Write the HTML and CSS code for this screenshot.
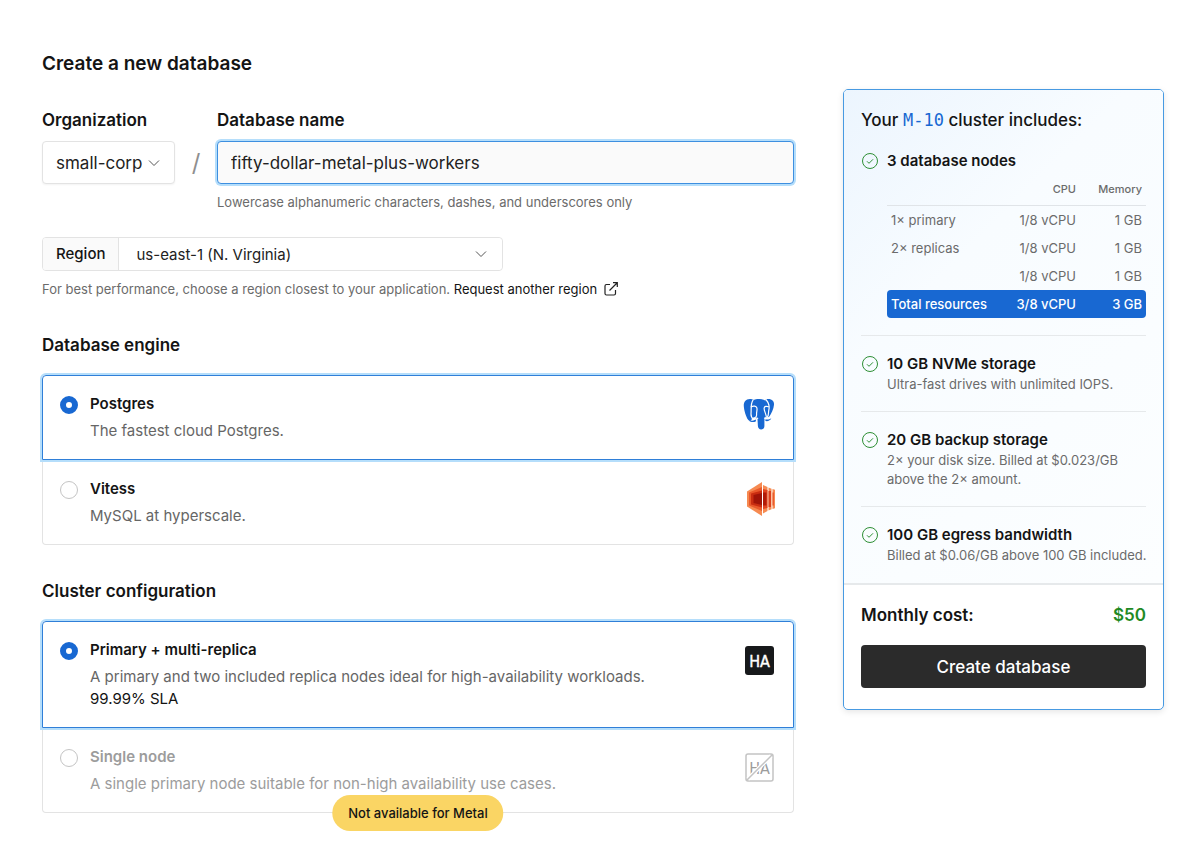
FILE: index.html
```html
<!DOCTYPE html>
<html lang="en">
<head>
    <meta charset="UTF-8">
    <meta name="viewport" content="width=device-width, initial-scale=1.0">
    <title>Create a new database</title>
    <link rel="stylesheet" href="styles.css">
</head>
<body>
    <form class="page">
        <main class="main">
            <h1 class="page-title">Create a new database</h1>

            <div class="name-row">
                <div class="field">
                    <label class="label" for="org">Organization</label>
                    <div class="select-box">
                        <select class="select select-org" id="org">
                            <option>small-corp</option>
                        </select>
                        <svg class="chevron" viewBox="0 0 12 12"><path d="M1 3.5l5 5 5-5"/></svg>
                    </div>
                </div>
                <div class="slash">/</div>
                <div class="field field-grow">
                    <label class="label" for="db-name">Database name</label>
                    <input class="input" type="text" id="db-name" value="fifty-dollar-metal-plus-workers">
                    <p class="hint">Lowercase alphanumeric characters, dashes, and underscores only</p>
                </div>
            </div>

            <div class="region">
                <label class="region-label" for="region">Region</label>
                <div class="select-box region-box">
                    <select class="select select-region" id="region">
                        <option>us-east-1 (N. Virginia)</option>
                    </select>
                    <svg class="chevron chevron-region" viewBox="0 0 12 12"><path d="M1 3.5l5 5 5-5"/></svg>
                </div>
            </div>
            <p class="hint">
                For best performance, choose a region closest to your application.
                <a class="link" href="#">Request another region<svg class="external" viewBox="0 0 14 14"><path d="M6 2.5H2.5A1.5 1.5 0 0 0 1 4v7.5A1.5 1.5 0 0 0 2.5 13H10a1.500 1.500 0 0 0 1.500-1.500V8M9 .7h4.300V5M13 1L5.500 8.500"/></svg></a>
            </p>

            <h2 class="section-title">Database engine</h2>
            <div class="options">
                <label class="option option-selected">
                    <input class="radio" type="radio" name="engine" checked>
                    <span class="option-text">
                        <span class="option-title">Postgres</span>
                        <span class="option-desc">The fastest cloud Postgres.</span>
                    </span>
                    <svg class="option-icon" viewBox="0 0 32 32">
                        <g fill="#1868d2">
                            <path d="M8 1C3 .5 .6 3.500 .8 8c.2 4 2 10.500 4.300 13.800 1.300 1.800 2.800 1.200 4-.4l2.400-3V2.300C10.400 1.500 9.300 1.100 8 1z"/>
                            <path d="M24 1c5-.5 7.300 2 7 5.800-.3 4.200-2.800 9-4.800 12-1.400 1.800-3 .8-3.800-.8V2z"/>
                            <path d="M8.800 3C10.500 1.500 13 .9 16.500.9c4.500 0 8 2.500 8.800 7 .5 3.500-.9 7-2.400 10.600-.8 1.500-1.500 2-1.500 4v5.500c0 2.200-1.300 3.500-3.200 3.500s-3.100-1.200-3.300-3.500l-.4-7c-3 .5-5.500-1-6-4.500-.4-4.500-.7-9.500.3-13.500z"/>
                            <path d="M5.800 22.500c1.800.5 4.700.4 7-1l.2 1.700c-2.300 1.300-5.200 1.100-7.200-.7z"/>
                            <path d="M22.500 21.300c2 .6 4.200.2 5.800-1-.7 2-3.500 3.300-5.900 2.700z"/>
                        </g>
                        <g fill="none" stroke="#fff" stroke-width="1.200" stroke-linecap="round">
                            <path d="M10 2.200C7.300 6 8.500 11 8 16c-.1 2 1 4 2.600 5.200"/>
                            <path d="M8.200 8.800c2.300-1.200 5-.9 5.700 1.100.6 2.400-.6 4.100-.3 6.600.3 2.300-1.600 3.500-3.300 3.700"/>
                            <path d="M23.300 2c3 3.500 3.300 8 2.300 11.500-.2 2 .2 3.700-1.400 6"/>
                            <path d="M25.700 8.800c-2.200-.9-4.400-.6-4.600 1.400 0 2.600 1.500 4.700 2.200 8.300"/>
                            <path d="M14.700 20.300c-2.500-.7-3.700.8-5.700.8M21.500 20.200c2-.2 3.500.2 5.500-.8"/>
                        </g>
                    </svg>
                </label>
                <label class="option">
                    <input class="radio" type="radio" name="engine">
                    <span class="option-text">
                        <span class="option-title">Vitess</span>
                        <span class="option-desc">MySQL at hyperscale.</span>
                    </span>
                    <svg class="option-icon" viewBox="0 0 32 34">
                        <path fill="#f68a51" d="M4 9.500L19 0v34L4 24.500z"/>
                        <path fill="#e9592b" d="M6 10.500L19 5v24L6 23.500z"/>
                        <path fill="#c92d10" d="M8 11.500l11-3v17l-11-3z"/>
                        <path fill="#9f1407" d="M10.500 13l8.500-2v12l-8.500-2z"/>
                        <path fill="#f68a51" d="M20 3l4.500 2v24L20 31.500z"/>
                        <path fill="#e14420" d="M20 7l4.500 1v18L20 27z"/>
                        <path fill="#b21a08" d="M20 10.500h3.500v13H20z"/>
                        <path fill="#f68a51" d="M25.500 5.500l3 1.200v20.600l-3 1.200z"/>
                        <path fill="#dd3f1c" d="M25.500 9H28v16h-2.500z"/>
                        <path fill="#f68a51" d="M29.500 7l2.500.8v18.400l-2.500.8z"/>
                        <path fill="#ea5b2d" d="M29.500 10.500H31v13h-1.500z"/>
                    </svg>
                </label>
            </div>

            <h2 class="section-title">Cluster configuration</h2>
            <div class="options">
                <label class="option option-selected">
                    <input class="radio" type="radio" name="cluster" checked>
                    <span class="option-text">
                        <span class="option-title">Primary + multi-replica</span>
                        <span class="option-desc">A primary and two included replica nodes ideal for high-availability workloads.</span>
                        <span class="option-desc option-sla">99.99% SLA</span>
                    </span>
                    <svg class="option-icon" viewBox="0 0 32 32">
                        <rect x="2" y="2" width="29" height="29" rx="3" fill="#17191b"/>
                        <text class="ha" x="16.500" y="22.500">HA</text>
                    </svg>
                </label>
                <label class="option option-disabled">
                    <input class="radio" type="radio" name="cluster" disabled>
                    <span class="option-text">
                        <span class="option-title">Single node</span>
                        <span class="option-desc">A single primary node suitable for non-high availability use cases.</span>
                    </span>
                    <svg class="option-icon" viewBox="0 0 32 32">
                        <rect x="3" y="3" width="27" height="27" rx="2" fill="#fff" stroke="#c4c4c4" stroke-width="1.500"/>
                        <text class="ha ha-off" x="16.500" y="22.500">HA</text>
                        <path d="M5 28L28 5" stroke="#fff" stroke-width="4"/>
                        <path d="M3.500 29.500l26-26" stroke="#c4c4c4" stroke-width="1.500"/>
                    </svg>
                </label>
                <div class="badge">Not available for Metal</div>
            </div>
        </main>

        <aside class="summary">
            <div class="summary-body">
                <h2 class="summary-title">Your <span class="plan">M-10</span> cluster includes:</h2>
                <div class="item item-first">
                    <svg class="check" viewBox="0 0 18 18"><circle cx="9" cy="9" r="7.500"/><path d="M6 9.300l2 2 4-4"/></svg>
                    <div class="item-text">
                        <h3 class="item-title">3 database nodes</h3>
                        <table class="nodes">
                            <thead>
                                <tr><th></th><th>CPU</th><th class="memory">Memory</th></tr>
                            </thead>
                            <tbody>
                                <tr><td>1× primary</td><td>1/8 vCPU</td><td>1 GB</td></tr>
                                <tr><td>2× replicas</td><td>1/8 vCPU</td><td>1 GB</td></tr>
                                <tr><td></td><td>1/8 vCPU</td><td>1 GB</td></tr>
                            </tbody>
                            <tfoot>
                                <tr><td>Total resources</td><td>3/8 vCPU</td><td>3 GB</td></tr>
                            </tfoot>
                        </table>
                    </div>
                </div>
                <div class="item">
                    <svg class="check" viewBox="0 0 18 18"><circle cx="9" cy="9" r="7.500"/><path d="M6 9.300l2 2 4-4"/></svg>
                    <div class="item-text">
                        <h3 class="item-title">10 GB NVMe storage</h3>
                        <p class="item-desc">Ultra-fast drives with unlimited IOPS.</p>
                    </div>
                </div>
                <div class="item">
                    <svg class="check" viewBox="0 0 18 18"><circle cx="9" cy="9" r="7.500"/><path d="M6 9.300l2 2 4-4"/></svg>
                    <div class="item-text">
                        <h3 class="item-title">20 GB backup storage</h3>
                        <p class="item-desc">2× your disk size. Billed at $0.023/GB above the 2× amount.</p>
                    </div>
                </div>
                <div class="item">
                    <svg class="check" viewBox="0 0 18 18"><circle cx="9" cy="9" r="7.500"/><path d="M6 9.300l2 2 4-4"/></svg>
                    <div class="item-text">
                        <h3 class="item-title">100 GB egress bandwidth</h3>
                        <p class="item-desc">Billed at $0.06/GB above 100 GB included.</p>
                    </div>
                </div>
            </div>
            <div class="summary-footer">
                <div class="cost">
                    <span>Monthly cost:</span>
                    <span class="price">$50</span>
                </div>
                <button class="submit" type="submit">Create database</button>
            </div>
        </aside>
    </form>
</body>
</html>
```
FILE: styles.css
```css
* {
    box-sizing: border-box;
}
body {
    margin: 0;
    font-family: Inter, "Liberation Sans", sans-serif;
    font-size: 15px;
    color: #141414;
    background-color: #fff;
}
h1, h2, h3, p {
    margin: 0;
}
.page {
    display: grid;
    grid-template-columns: 1fr 321px;
    gap: 49px;
    align-items: start;
    padding: 51px 36px 30px 42px;
}
.page-title {
    font-size: 19px;
    font-weight: 600;
    line-height: 26px;
}

/* organization / name */
.name-row {
    display: flex;
    margin-top: 31px;
}
.field-grow {
    flex-grow: 1;
}
.label {
    display: block;
    margin-bottom: 9px;
    font-size: 17px;
    font-weight: 600;
    line-height: 24px;
}
.select-box {
    position: relative;
}
.select {
    appearance: none;
    display: block;
    margin: 0;
    border: 1px solid #e3e3e3;
    border-radius: 4px;
    background-color: #fff;
    color: #222;
    font-family: inherit;
}
.select-org {
    width: 133px;
    height: 43px;
    padding: 0 30px 0 13px;
    font-size: 17px;
    box-shadow: 0 1px 2px rgba(0, 0, 0, 0.05);
}
.chevron {
    position: absolute;
    right: 15px;
    top: 50%;
    width: 12px;
    height: 12px;
    margin-top: -6px;
    fill: none;
    stroke: #555;
    pointer-events: none;
}
.slash {
    width: 42px;
    padding-top: 33px;
    font-size: 24px;
    line-height: 43px;
    text-align: center;
    color: #8f8f8f;
}
.input {
    display: block;
    width: 100%;
    height: 43px;
    padding: 0 13px;
    border: 1px solid #3d8fe0;
    border-radius: 4px;
    background-color: #fafafa;
    box-shadow: 0 0 0 2px #b5defb;
    color: #222;
    font-family: inherit;
    font-size: 17px;
    outline: none;
}
.hint {
    margin-top: 8px;
    font-size: 13px;
    line-height: 20px;
    color: #6b6b6b;
}

/* region */
.region {
    display: flex;
    width: 461px;
    height: 34px;
    margin-top: 25px;
    border: 1px solid #e3e3e3;
    border-radius: 4px;
    overflow: hidden;
}
.region-label {
    padding: 0 13px;
    border-right: 1px solid #e3e3e3;
    background-color: #fafafa;
    font-size: 15px;
    font-weight: 500;
    line-height: 32px;
}
.region-box {
    flex-grow: 1;
}
.select-region {
    width: 100%;
    height: 32px;
    padding: 0 34px 0 17px;
    border: none;
    font-size: 15px;
}
.link {
    color: #141414;
    text-decoration: none;
}
.external {
    width: 14px;
    height: 14px;
    margin-left: 7px;
    vertical-align: -2px;
    fill: none;
    stroke: #222;
    stroke-width: 1.2;
}

/* radio cards */
.section-title {
    margin-top: 34px;
    font-size: 17px;
    font-weight: 600;
    line-height: 24px;
}
.options {
    position: relative;
    margin-top: 18px;
}
.option {
    display: flex;
    align-items: flex-start;
    gap: 12px;
    padding: 17px 18px 17px 17px;
    border: 1px solid #e3e3e3;
    border-top: none;
    border-radius: 0 0 4px 4px;
}
.option-selected {
    position: relative;
    padding-top: 16px;
    border: 1px solid #2f7fd8;
    border-radius: 4px 4px 0 0;
    box-shadow: 0 0 0 2px #b5defb;
}
.radio {
    appearance: none;
    flex-shrink: 0;
    width: 18px;
    height: 18px;
    margin: 4px 0 0;
    border: 1px solid #c4c4c4;
    border-radius: 50%;
    background-color: #fff;
}
.radio:checked {
    border: 6px solid #1868d2;
}
.option-text {
    display: flex;
    flex-direction: column;
    flex-grow: 1;
}
.option-title {
    margin-bottom: 4px;
    font-weight: 600;
    line-height: 24px;
}
.option-desc {
    line-height: 22px;
    color: #666;
}
.option-sla {
    color: #141414;
}
.option-icon {
    flex-shrink: 0;
    width: 32px;
    height: 34px;
    margin-top: 5px;
}
.option-disabled .option-title,
.option-disabled .option-desc {
    color: #9c9c9c;
}
.ha {
    font-family: "DejaVu Sans Condensed", "DejaVu Sans", sans-serif;
    font-size: 16px;
    text-anchor: middle;
    fill: #fff;
    stroke: #fff;
    stroke-width: 0.4;
}
.ha-off {
    fill: #9c9c9c;
    stroke: none;
}
.badge {
    position: absolute;
    left: 50%;
    bottom: -18px;
    transform: translateX(-50%);
    padding: 0 16px;
    border-radius: 18px;
    background-color: #fad564;
    font-size: 13px;
    font-weight: 500;
    line-height: 36px;
    white-space: nowrap;
}

/* summary panel */
.summary {
    margin-top: 38px;
    border: 1px solid #479ae2;
    border-radius: 5px;
    overflow: hidden;
    box-shadow: 0 2px 6px rgba(0, 0, 0, 0.1);
}
.summary-body {
    padding: 17px 17px 1px;
    border-bottom: 2px solid #e6e9eb;
    background: linear-gradient(135deg, #ecf5fe 0%, #f8fcff 35%, #fcfeff 100%);
}
.summary-title {
    font-size: 17px;
    font-weight: 500;
    line-height: 26px;
}
.plan {
    font-family: "DejaVu Sans Mono", monospace;
    font-weight: 400;
    color: #1868d2;
}
.item {
    display: flex;
    gap: 8px;
    padding: 17px 0;
    border-top: 1px solid #e6e9eb;
}
.item-first {
    border-top: none;
}
.check {
    flex-shrink: 0;
    width: 18px;
    height: 18px;
    margin-top: 2px;
    fill: none;
    stroke: #2e8f35;
}
.item-text {
    flex-grow: 1;
}
.item-title {
    font-size: 15px;
    font-weight: 600;
    line-height: 22px;
}
.item-desc {
    margin-right: -8px;
    font-size: 13px;
    line-height: 19px;
    color: #6b6b6b;
}
.nodes {
    width: 100%;
    border-collapse: separate;
    border-spacing: 0;
    font-size: 13px;
    color: #6b6b6b;
}
.nodes th {
    height: 34px;
    padding: 0 4px;
    border-bottom: 1px solid #e0e4e8;
    font-size: 11px;
    font-weight: 500;
    text-align: right;
}
.nodes .memory {
    width: 66px;
}
.nodes td {
    height: 28px;
    padding: 0 4px;
    text-align: right;
}
.nodes td:first-child {
    text-align: left;
}
.nodes tfoot td {
    background-color: #1868d2;
    color: #fff;
    font-weight: 500;
}
.nodes tfoot td:first-child {
    border-radius: 4px 0 0 4px;
}
.nodes tfoot td:last-child {
    border-radius: 0 4px 4px 0;
}
.summary-footer {
    padding: 17px 17px 21px;
}
.cost {
    display: flex;
    justify-content: space-between;
    font-size: 17px;
    font-weight: 600;
    line-height: 26px;
}
.price {
    color: #1f8a24;
}
.submit {
    width: 100%;
    height: 43px;
    margin-top: 17px;
    border: none;
    border-radius: 4px;
    background-color: #2b2b2b;
    color: #fff;
    font-family: inherit;
    font-size: 17px;
    font-weight: 500;
    cursor: pointer;
}
```
